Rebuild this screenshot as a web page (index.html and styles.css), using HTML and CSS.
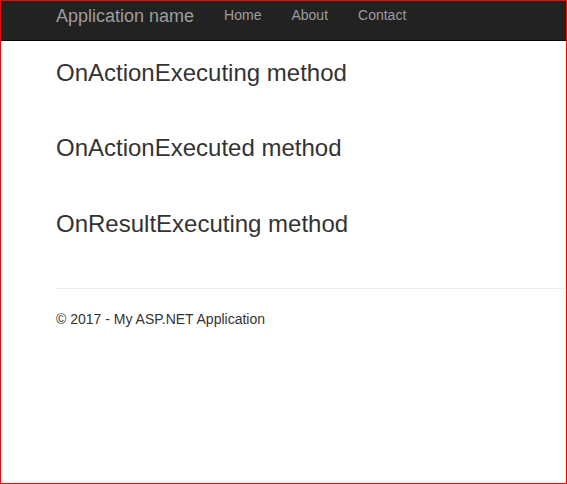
FILE: index.html
```html
<!DOCTYPE html>
<html>
<head>
<meta charset="utf-8">
<title>Application name</title>
<link rel="stylesheet" href="styles.css">
</head>
<body>
<div class="frame">
  <nav class="navbar">
    <a class="brand" href="#">Application name</a>
    <ul class="nav">
      <li><a href="#">Home</a></li>
      <li><a href="#">About</a></li>
      <li><a href="#">Contact</a></li>
    </ul>
  </nav>
  <main class="content">
    <h2>OnActionExecuting method</h2>
    <h2>OnActionExecuted method</h2>
    <h2 class="last">OnResultExecuting method</h2>
    <hr>
    <footer class="footer">
      <p>&copy; 2017 - My ASP.NET Application</p>
    </footer>
  </main>
</div>
</body>
</html>
```
FILE: styles.css
```css
html, body {
  margin: 0;
  padding: 0;
  height: 100%;
}
body {
  font-family: "Liberation Sans", Arial, sans-serif;
  font-size: 14px;
  line-height: 1.42857;
  color: #333;
  background: #fff;
}
.frame {
  box-sizing: border-box;
  height: 484px;
  width: 567px;
  border: 1px solid #ff0000;
  overflow: hidden;
}
.navbar {
  display: flex;
  align-items: flex-start;
  height: 39px;
  background: #222;
  border-bottom: 1px solid #080808;
  padding-left: 40px;
}
.brand {
  font-size: 18px;
  line-height: 20px;
  padding: 5px 15px;
  color: #9d9d9d;
  text-decoration: none;
}
.nav {
  display: flex;
  list-style: none;
  margin: 0;
  padding: 0;
}
.nav a {
  display: block;
  padding: 4px 15px 6px;
  line-height: 20px;
  color: #9d9d9d;
  text-decoration: none;
}
.content {
  padding-left: 55px;
}
h2 {
  font-size: 24px;
  font-weight: 500;
  line-height: 26.4px;
  margin: 19px 0 49px;
}
h2 + h2 {
  margin-top: 0;
}
h2.last {
  margin-bottom: 51px;
}
hr {
  border: 0;
  border-top: 1px solid #eee;
  margin: 0;
}
.footer p {
  margin: 21px 0 20px;
}
```
